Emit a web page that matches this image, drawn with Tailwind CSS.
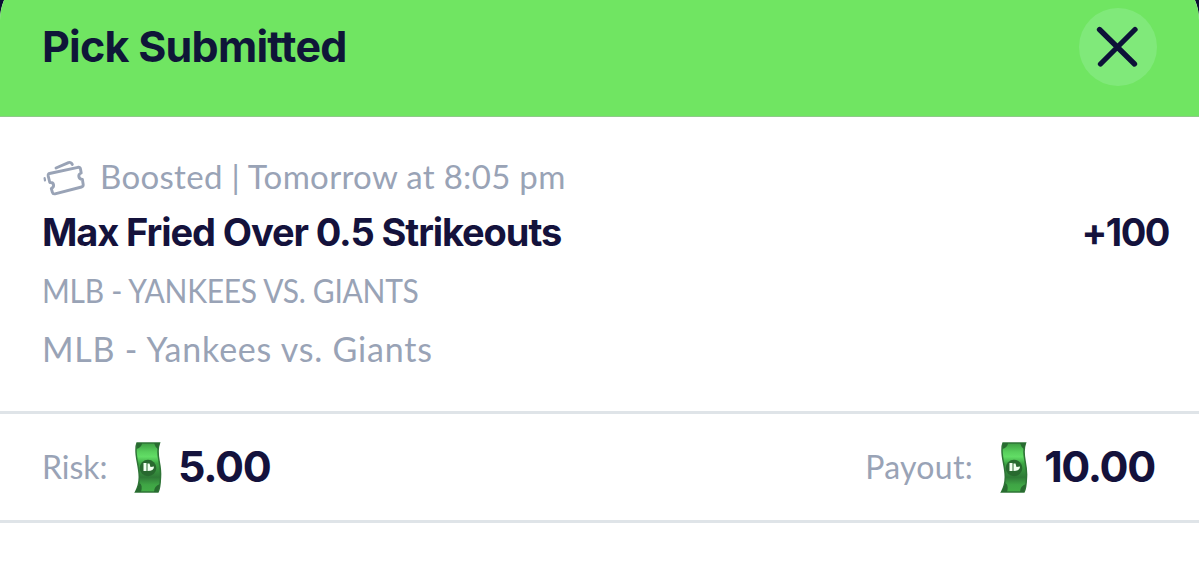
<!DOCTYPE html>
<html lang="en">
<head>
  <meta charset="UTF-8" />
  <meta name="viewport" content="width=device-width, initial-scale=1.0" />
  <title>Pick Submitted</title>
  <script src="https://cdn.jsdelivr.net/npm/@tailwindcss/browser@4"></script>
</head>

<body class="bg-[#0b1033] h-screen overflow-hidden font-['Inter',sans-serif] text-[#14123c]">

  <!-- Bottom sheet, its top edge sits above the viewport -->
  <main class="-mt-[30px] h-[595px] bg-white rounded-t-[50px] overflow-hidden">

    <!-- Header -->
    <header class="h-[147px] pt-[30px] pl-[42px] pr-[42px] bg-[#70e562] border-b border-[#8fc98a] flex items-start justify-between">
      <h1 class="h-[93px] flex items-center text-[43px] font-bold tracking-[-0.75px] whitespace-nowrap text-[#0f1638]">Pick Submitted</h1>
      <button class="mt-[8px] size-[78px] rounded-full bg-[#80e97a] flex items-center justify-center" aria-label="Close">
        <svg class="size-[44px]" viewBox="0 0 44 44" fill="none" stroke="#0d1238" stroke-width="5.300" stroke-linecap="round">
          <path d="M3.500 4.500 38.500 39M39 4.500 4.500 39" />
        </svg>
      </button>
    </header>

    <!-- Pick details -->
    <section class="h-[297px] pt-[35px] pl-[42px] pr-[30px] border-b-3 border-[#dfe4e8] whitespace-nowrap font-['Lato',sans-serif] text-[#99a3b6]">
      <div class="h-[50px] flex items-center">
        <svg class="w-[44px] h-[38px] mt-[4px] shrink-0" viewBox="0 0 44 38" fill="none" stroke="currentColor" stroke-width="2.900" stroke-linejoin="round" stroke-linecap="round">
          <path d="M7.500 13.500 36 7.300Q38 7 38.500 9L39.200 13C35.500 14.500 36.300 19 40.400 19.500L41.200 24.500Q41.400 26.500 39.500 27L13 33.800Q11 34.300 10.400 32.300L9.300 28.500C13 26.500 12 22 7.800 22.500L6.200 16Q6 14 7.500 13.500Z" />
          <path d="M14 8 26.500 2.600Q28.500 1.900 29.600 3.300L30.300 4.500" />
          <path d="M2.600 18 3 20.500" stroke-width="2.200" />
        </svg>
        <span class="ml-[14px] text-[33px] tracking-[0.32px]">Boosted | Tomorrow at 8:05 pm</span>
      </div>
      <div class="h-[60px] flex items-center justify-between font-['Inter',sans-serif] text-[38px] font-bold text-[#14123c]">
        <h2 class="tracking-[-1.1px]">Max Fried Over 0.5 Strikeouts</h2>
        <span class="tracking-[-1.5px]">+100</span>
      </div>
      <p class="h-[58px] flex items-center text-[33px] tracking-[-0.3px] origin-left scale-x-[0.908]">MLB - YANKEES VS. GIANTS</p>
      <p class="h-[57px] flex items-center text-[34px] tracking-[0.78px]">MLB - Yankees vs. Giants</p>
    </section>

    <!-- Risk / payout -->
    <section class="h-[109px] pl-[42px] pr-[44px] border-b-3 border-[#dfe4e8] flex items-center justify-between whitespace-nowrap">
      <div class="flex items-center">
        <span class="w-[92px] font-['Lato',sans-serif] text-[32px] text-[#99a3b6]">Risk:</span>
        <svg class="w-[28px] h-[51px] shrink-0" viewBox="0 0 28 51">
          <defs>
            <linearGradient id="bill" x1="0" y1="0" x2="0" y2="1">
              <stop offset="0" stop-color="#3c9c42" />
              <stop offset="0.180" stop-color="#58cf5c" />
              <stop offset="0.280" stop-color="#62dd66" />
              <stop offset="0.420" stop-color="#3da644" />
              <stop offset="0.700" stop-color="#2f7a37" />
              <stop offset="0.850" stop-color="#3fa545" />
              <stop offset="1" stop-color="#43ae47" />
            </linearGradient>
          </defs>
          <path d="M3 1H25.500C21 13 27.500 20 26.500 35Q26 47 24 50H1.500C10 35 1.500 20 2 8Q2 3 3 1Z" fill="url(#bill)" stroke="#2f7437" stroke-width="1.500" />
          <path d="M3 1H8Q8 5 2.500 7ZM25.500 1H20Q21 5 24 7ZM5.500 41Q9 43 7 50H1.500ZM26 42Q20 44 20 50H24Z" fill="#286b30" />
          <circle cx="14" cy="26" r="8.300" fill="#28692f" />
          <path d="M9.500 21H12.500V29H9.500ZM13.500 21.500H15.500L16.500 25 20 24.500Q20 29 13.500 29Z" fill="#f2fff1" />
        </svg>
        <span class="ml-[16px] -mt-[2px] text-[43px] font-bold tracking-[-1.3px]">5.00</span>
      </div>
      <div class="flex items-center">
        <span class="w-[135px] font-['Lato',sans-serif] text-[32px] tracking-[0.3px] text-[#99a3b6]">Payout:</span>
        <svg class="w-[28px] h-[51px] shrink-0" viewBox="0 0 28 51">
          <path d="M3 1H25.500C21 13 27.500 20 26.500 35Q26 47 24 50H1.500C10 35 1.500 20 2 8Q2 3 3 1Z" fill="url(#bill)" stroke="#2f7437" stroke-width="1.500" />
          <path d="M3 1H8Q8 5 2.500 7ZM25.500 1H20Q21 5 24 7ZM5.500 41Q9 43 7 50H1.500ZM26 42Q20 44 20 50H24Z" fill="#286b30" />
          <circle cx="14" cy="26" r="8.300" fill="#28692f" />
          <path d="M9.500 21H12.500V29H9.500ZM13.500 21.500H15.500L16.500 25 20 24.500Q20 29 13.500 29Z" fill="#f2fff1" />
        </svg>
        <span class="ml-[16px] -mt-[2px] text-[43px] font-bold tracking-[-1.3px]">10.00</span>
      </div>
    </section>

  </main>
</body>
</html>
